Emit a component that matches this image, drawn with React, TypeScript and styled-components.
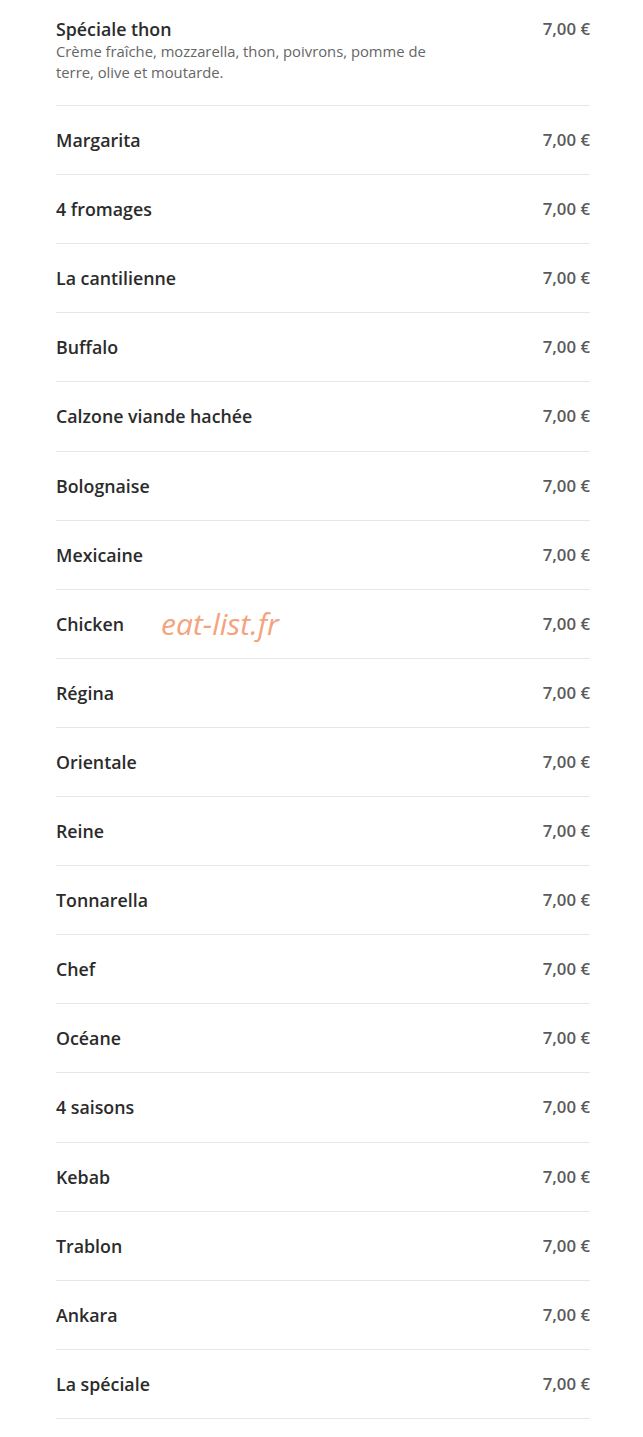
import React from "react";
import styled, { createGlobalStyle } from "styled-components";

const GlobalStyle = createGlobalStyle`
  html, body {
    margin: 0;
    padding: 0;
    background: #fff;
  }
  body {
    font-family: "Open Sans", "Noto Sans", sans-serif;
    -webkit-font-smoothing: antialiased;
  }
`;

type Dish = { name: string; price: string; description?: string };

const dishes: Dish[] = [
  {
    name: "Spéciale thon",
    price: "7,00 €",
    description: "Crème fraîche, mozzarella, thon, poivrons, pomme de terre, olive et moutarde.",
  },
  { name: "Margarita", price: "7,00 €" },
  { name: "4 fromages", price: "7,00 €" },
  { name: "La cantilienne", price: "7,00 €" },
  { name: "Buffalo", price: "7,00 €" },
  { name: "Calzone viande hachée", price: "7,00 €" },
  { name: "Bolognaise", price: "7,00 €" },
  { name: "Mexicaine", price: "7,00 €" },
  { name: "Chicken", price: "7,00 €" },
  { name: "Régina", price: "7,00 €" },
  { name: "Orientale", price: "7,00 €" },
  { name: "Reine", price: "7,00 €" },
  { name: "Tonnarella", price: "7,00 €" },
  { name: "Chef", price: "7,00 €" },
  { name: "Océane", price: "7,00 €" },
  { name: "4 saisons", price: "7,00 €" },
  { name: "Kebab", price: "7,00 €" },
  { name: "Trablon", price: "7,00 €" },
  { name: "Ankara", price: "7,00 €" },
  { name: "La spéciale", price: "7,00 €" },
];

export default function App() {
  return (
    <Page>
      <GlobalStyle />
      <Menu>
        {dishes.map(dish => (
          <Row key={dish.name}>
            <Info>
              <Name>{dish.name}</Name>
              {dish.description && <Description>{dish.description}</Description>}
            </Info>
            <Price>{dish.price}</Price>
          </Row>
        ))}
      </Menu>
      <Watermark>eat-list.fr</Watermark>
    </Page>
  );
}

const Page = styled.div`
  position: relative;
  width: 643px;
  height: 1437px;
  overflow: hidden;
  background: #fff;
`;

const Menu = styled.ul`
  list-style: none;
  margin: -5px 53px 0 56px;
  padding: 0;
`;

const Row = styled.li`
  display: flex;
  justify-content: space-between;
  align-items: flex-start;
  padding: 22px 0;
  border-bottom: 1px solid #e6e6e6;
`;

const Info = styled.div`
  display: flex;
  flex-direction: column;
  max-width: 400px;
`;

const Name = styled.span`
  font-size: 17.8px;
  line-height: 24.1px;
  font-weight: 600;
  color: #2b2b2b;
`;

const Description = styled.p`
  margin: 0;
  font-size: 14.8px;
  line-height: 21px;
  color: #666;
`;

const Price = styled.span`
  font-size: 16.8px;
  line-height: 24.1px;
  font-weight: 600;
  color: #5a5a5a;
  white-space: nowrap;
`;

const Watermark = styled.div`
  position: absolute;
  left: 161px;
  top: 603px;
  font-size: 30px;
  font-style: italic;
  font-weight: 400;
  color: #f5a27d;
  pointer-events: none;
`;
